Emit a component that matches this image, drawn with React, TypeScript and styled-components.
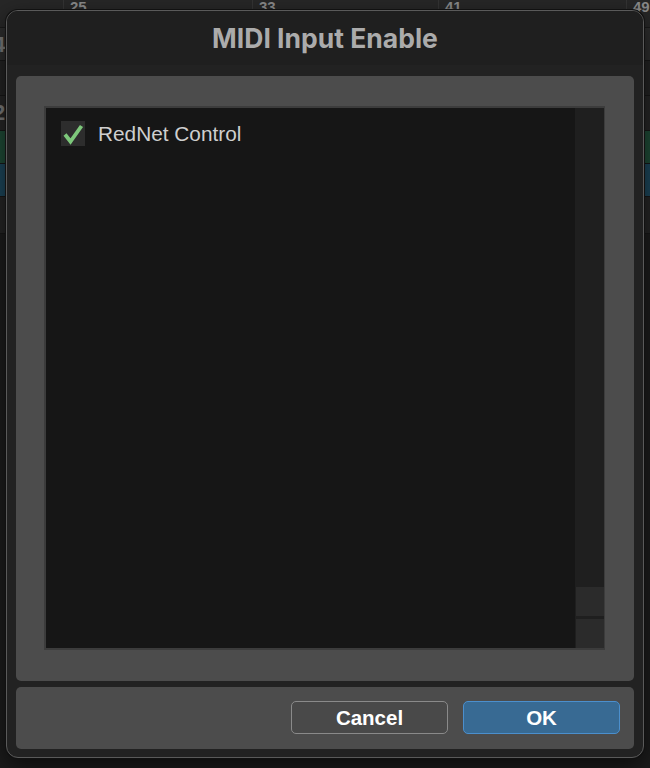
import styled, { createGlobalStyle } from 'styled-components';

const GlobalStyle = createGlobalStyle`
  html, body {
    margin: 0;
    padding: 0;
    background: #1c1c1c;
    overflow: hidden;
  }
  * {
    box-sizing: border-box;
  }
`;

const Desktop = styled.div`
  position: relative;
  width: 650px;
  height: 768px;
  display: flex;
  flex-direction: column;
  background: #1c1c1c;
  font-family: "Liberation Sans", Arial, sans-serif;
`;

const Ruler = styled.div`
  height: 28px;
  display: grid;
  grid-template-columns: 63px 189px 186px 188px 24px;
  background: #272727;
  border-bottom: 1px solid #1a1a1a;
`;

const RulerCell = styled.div`
  border-left: 1px solid #343434;
  padding: 0 0 0 6px;
  font-size: 15px;
  font-weight: 700;
  line-height: 14px;
  color: #8a8a8a;
  overflow: hidden;
  &:first-child {
    border-left: none;
  }
`;

const Track = styled.div<{ $h: number; $bg: string }>`
  height: ${(p) => p.$h}px;
  background: ${(p) => p.$bg};
  border-bottom: 1px solid #171717;
  padding: 8px 0 0 0;
  font-size: 22px;
  font-weight: 700;
  line-height: 18px;
  color: #7a7a7a;
  text-indent: -7px;
  overflow: hidden;
`;

const Window = styled.div`
  position: absolute;
  left: 6px;
  top: 10px;
  width: 638px;
  height: 748px;
  display: flex;
  flex-direction: column;
  background: #222222;
  border: 1px solid #5a5a5a;
  border-radius: 12px;
  box-shadow: 0 0 0 1px #111111, 0 8px 24px rgba(0, 0, 0, 0.6);
  overflow: hidden;
`;

const TitleBar = styled.div`
  height: 54px;
  display: flex;
  align-items: center;
  justify-content: center;
  background: #1f1f1f;
  font-family: Inter, "Liberation Sans", Arial, sans-serif;
  font-size: 26.5px;
  font-weight: 700;
  color: #ababab;
  padding-bottom: 1px;
`;

const Body = styled.div`
  flex: 1;
  display: flex;
  flex-direction: column;
  gap: 6px;
  padding: 11px 9px 8px 9px;
`;

const Panel = styled.div`
  background: #4c4c4c;
  border-radius: 5px;
`;

const ListPanel = styled(Panel)`
  flex: 1;
  display: flex;
  padding: 30px 29px 31px 28px;
`;

const ListBox = styled.div`
  flex: 1;
  display: flex;
  border: 2px solid #3c3c3c;
  border-right-width: 1px;
  background: #161616;
`;

const List = styled.div`
  flex: 1;
  display: flex;
  flex-direction: column;
  padding: 12px 15px;
`;

const Row = styled.label`
  display: flex;
  align-items: center;
  gap: 13px;
  height: 27px;
  font-size: 20.8px;
  color: #cfcfcf;
`;

const CheckBox = styled.span`
  width: 24px;
  height: 25px;
  display: flex;
  align-items: center;
  justify-content: center;
  background: #2d2d2d;
`;

const ScrollTrack = styled.div`
  width: 29px;
  display: flex;
  flex-direction: column;
  justify-content: flex-end;
  gap: 3px;
  background: #1f1f1f;
  padding-left: 1px;
`;

const ScrollArrow = styled.div`
  height: 29px;
  background: #2b2b2b;
`;

const ButtonPanel = styled(Panel)`
  height: 62px;
  display: flex;
  justify-content: flex-end;
  align-items: flex-start;
  gap: 15px;
  padding: 14px 14px 0 0;
`;

const Button = styled.button<{ $primary?: boolean }>`
  width: 157px;
  height: 33px;
  border-radius: 5px;
  border: 1px solid ${(p) => (p.$primary ? '#4b8fcd' : '#8a8a8a')};
  background: ${(p) => (p.$primary ? '#386a93' : '#494949')};
  color: #ffffff;
  font-family: "Liberation Sans", Arial, sans-serif;
  font-size: 20.5px;
  font-weight: 700;
  padding: 0;
  cursor: pointer;
`;

const tracks = [
  { h: 33, bg: '#2d2d2d', label: '4' },
  { h: 35, bg: '#232323', label: '' },
  { h: 35, bg: '#262626', label: '2' },
  { h: 33, bg: '#1f4a36', label: '' },
  { h: 33, bg: '#1c4559', label: '' },
  { h: 37, bg: '#252525', label: '' },
];

const MidiInputDialog = () => {
  return (
    <Window>
      <TitleBar>MIDI Input Enable</TitleBar>
      <Body>
        <ListPanel>
          <ListBox>
            <List>
              <Row>
                <CheckBox>
                  <svg width="22" height="22" viewBox="0 0 22 22">
                    <path d="M3 11.5 L8.5 18.5 L19.5 3" fill="none" stroke="#7dc87b" strokeWidth="3.8" strokeLinejoin="miter" />
                  </svg>
                </CheckBox>
                RedNet Control
              </Row>
            </List>
            <ScrollTrack>
              <ScrollArrow />
              <ScrollArrow />
            </ScrollTrack>
          </ListBox>
        </ListPanel>
        <ButtonPanel>
          <Button>Cancel</Button>
          <Button $primary>OK</Button>
        </ButtonPanel>
      </Body>
    </Window>
  );
};

const App = () => {
  return (
    <>
      <GlobalStyle />
      <Desktop>
        <Ruler>
          <RulerCell />
          <RulerCell>25</RulerCell>
          <RulerCell>33</RulerCell>
          <RulerCell>41</RulerCell>
          <RulerCell>49</RulerCell>
        </Ruler>
        {tracks.map((t, i) => (
          <Track key={i} $h={t.h} $bg={t.bg}>
            {t.label}
          </Track>
        ))}
        <MidiInputDialog />
      </Desktop>
    </>
  );
};

export default App;
